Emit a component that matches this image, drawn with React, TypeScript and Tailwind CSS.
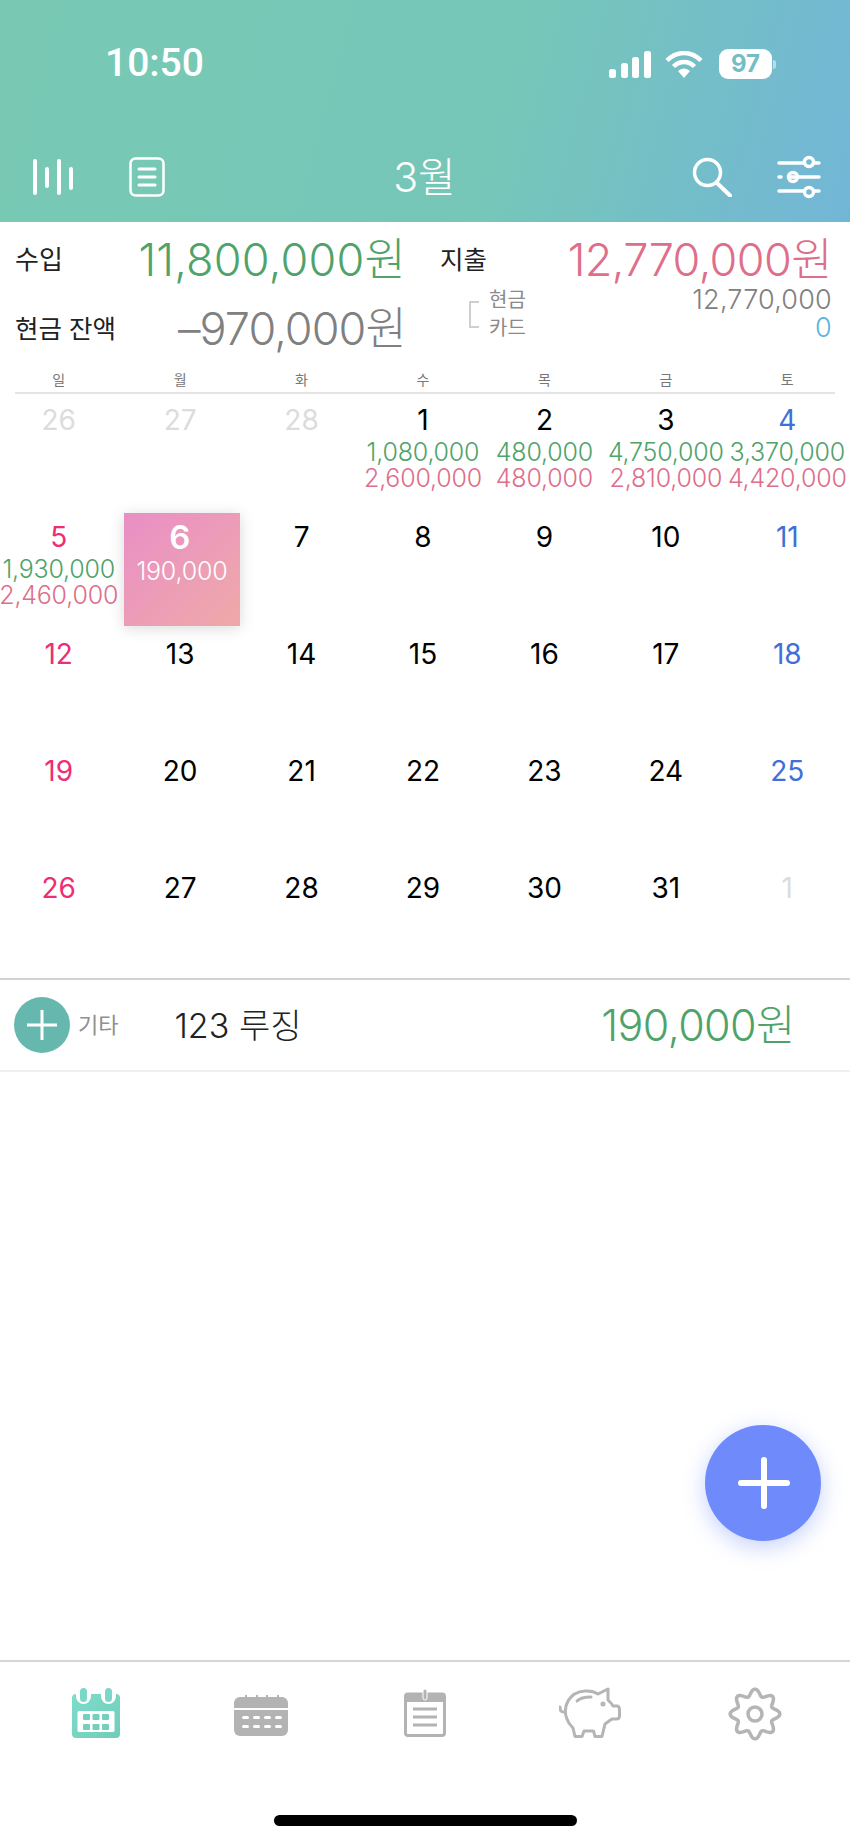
const num = { fontFamily: '"Inter", "Noto Sans CJK KR", sans-serif' };

interface DayCell {
  day: number;
  tone?: "muted" | "sun" | "sat";
  income?: string;
  spend?: string;
  selected?: boolean;
}

const weekdays = ["일", "월", "화", "수", "목", "금", "토"];

const days: DayCell[] = [
  { day: 26, tone: "muted" },
  { day: 27, tone: "muted" },
  { day: 28, tone: "muted" },
  { day: 1, income: "1,080,000", spend: "2,600,000" },
  { day: 2, income: "480,000", spend: "480,000" },
  { day: 3, income: "4,750,000", spend: "2,810,000" },
  { day: 4, tone: "sat", income: "3,370,000", spend: "4,420,000" },
  { day: 5, tone: "sun", income: "1,930,000", spend: "2,460,000" },
  { day: 6, selected: true, income: "190,000" },
  { day: 7 },
  { day: 8 },
  { day: 9 },
  { day: 10 },
  { day: 11, tone: "sat" },
  { day: 12, tone: "sun" },
  { day: 13 },
  { day: 14 },
  { day: 15 },
  { day: 16 },
  { day: 17 },
  { day: 18, tone: "sat" },
  { day: 19, tone: "sun" },
  { day: 20 },
  { day: 21 },
  { day: 22 },
  { day: 23 },
  { day: 24 },
  { day: 25, tone: "sat" },
  { day: 26, tone: "sun" },
  { day: 27 },
  { day: 28 },
  { day: 29 },
  { day: 30 },
  { day: 31 },
  { day: 1, tone: "muted" },
];

function toneClass(tone?: DayCell["tone"]) {
  if (tone === "muted") return "text-[#dcdcdc]";
  if (tone === "sun") return "text-[#ee2d75]";
  if (tone === "sat") return "text-[#3f6fd8]";
  return "text-black";
}

function Cell({ cell }: { cell: DayCell }) {
  if (cell.selected) {
    return (
      <div className="h-[117px] pt-[3px] pl-[4.5px]">
        <div className="flex h-[113px] w-[116px] flex-col items-center bg-linear-to-br from-[#e98ec6] to-[#efa9a8] pt-[6px] text-white shadow-[0_2px_14px_rgba(0,0,0,0.15)]">
          <div className="pr-[4px] text-[33px] leading-[36px] font-semibold">{cell.day}</div>
          <div className="mt-[2px] text-[25px] leading-[28px] font-light tracking-[-0.2px]">{cell.income}</div>
        </div>
      </div>
    );
  }
  return (
    <div className="flex h-[117px] flex-col items-center pt-[9px]">
      <div className={`text-[28px] leading-[36px] ${toneClass(cell.tone)}`}>{cell.day}</div>
      {cell.income && (
        <div className="mt-[1px] text-[25px] leading-[26px] font-light tracking-[-0.2px] whitespace-nowrap text-[#4fa36a]">
          {cell.income}
        </div>
      )}
      {cell.spend && (
        <div className="text-[25px] leading-[26px] font-light tracking-[-0.2px] whitespace-nowrap text-[#de6e8a]">
          {cell.spend}
        </div>
      )}
    </div>
  );
}

function StatusIcons() {
  return (
    <div className="flex items-center">
      <svg width="42" height="27" viewBox="0 0 42 27" fill="white">
        <rect x="0" y="18" width="7" height="9" rx="2.5" />
        <rect x="12" y="12" width="7" height="15" rx="2.5" />
        <rect x="23" y="6" width="7" height="21" rx="2.5" />
        <rect x="35" y="0" width="7" height="27" rx="2.5" />
      </svg>
      <svg className="ml-[14px]" width="38" height="27" viewBox="0 0 38 27" fill="none" stroke="white" strokeLinecap="butt">
        <path d="M2 9.5C12 -0.5 26 -0.5 36 9.5" strokeWidth="4.5" />
        <path d="M8.5 15.5C14.5 9.5 23.5 9.5 29.5 15.5" strokeWidth="4.5" />
        <path d="M13 20L19 27L25 20C21 16.5 17 16.5 13 20Z" fill="white" stroke="none" />
      </svg>
      <div className="ml-[16px] flex h-[30px] w-[53px] items-center justify-center rounded-[9px] bg-white text-[24px] leading-none font-bold text-[#74bdc4]">
        97
      </div>
      <div className="ml-[1px] h-[9px] w-[3px] rounded-r-full bg-white/50" />
    </div>
  );
}

function BarsIcon() {
  return (
    <svg width="42" height="36" viewBox="0 0 42 36" fill="none" stroke="white" strokeWidth="4" strokeLinecap="round">
      <path d="M3 2V34M15 10V27M27 2V34M39 10V29" />
    </svg>
  );
}

function DocIcon() {
  return (
    <svg width="36" height="40" viewBox="0 0 36 40" fill="none" stroke="white" strokeWidth="2.5" strokeLinecap="round">
      <rect x="1.5" y="1.5" width="33" height="37" rx="5" />
      <path d="M10 12H26M10 20H26M10 28H26" strokeWidth="3" />
    </svg>
  );
}

function SearchIcon() {
  return (
    <svg width="40" height="40" viewBox="0 0 40 40" fill="none" stroke="white" strokeWidth="3.5" strokeLinecap="round">
      <circle cx="15.5" cy="15.5" r="13" />
      <path d="M25 26L38 38.5" strokeWidth="4" />
    </svg>
  );
}

function SlidersIcon() {
  return (
    <svg width="44" height="44" viewBox="0 0 44 44" fill="none" stroke="white" strokeWidth="3.5" strokeLinecap="round">
      <path d="M2 8H27M37 8H42M2 22H4M13 22H42M2 36H27M37 36H42" />
      <circle cx="32" cy="7" r="4.5" />
      <circle cx="16" cy="22" r="4.5" />
      <circle cx="32" cy="37" r="4.5" />
    </svg>
  );
}

function CalendarTab() {
  return (
    <svg width="48" height="50" viewBox="0 0 48 50">
      <defs>
        <linearGradient id="tabGrad" x1="0" y1="0" x2="1" y2="1">
          <stop offset="0" stopColor="#7fdccb" />
          <stop offset="1" stopColor="#70cdb8" />
        </linearGradient>
      </defs>
      <path d="M4 6H44A4 4 0 0 1 48 10V46A4 4 0 0 1 44 50H4A4 4 0 0 1 0 46V10A4 4 0 0 1 4 6Z" fill="url(#tabGrad)" />
      <rect x="4" y="-2" width="15" height="18" rx="7.5" fill="white" />
      <rect x="29" y="-2" width="15" height="18" rx="7.5" fill="white" />
      <rect x="8" y="0" width="7" height="14" rx="3.5" fill="#7bd8c6" />
      <rect x="33" y="0" width="7" height="14" rx="3.5" fill="#7bd8c6" />
      <rect x="5.5" y="23" width="37" height="21" rx="1.5" fill="white" />
      {[11, 20.5, 30].map((x) =>
        [26, 36].map((y) => <rect key={`${x}-${y}`} x={x} y={y} width="7" height="6" rx="1" fill="#74d0bd" />)
      )}
    </svg>
  );
}

function MonthTab() {
  return (
    <svg width="54" height="41" viewBox="0 0 54 41" fill="#b3b3b3">
      <path d="M6 2H48A6 6 0 0 1 54 8V13H0V8A6 6 0 0 1 6 2Z" />
      <path d="M0 15H54V35A6 6 0 0 1 48 41H6A6 6 0 0 1 0 35Z" />
      <path d="M12 2V0M23 2V0M33 2V0M44 2V0" stroke="#b3b3b3" strokeWidth="2" />
      {[8, 19, 30, 41].map((x) =>
        [21, 30].map((y) => <rect key={`${x}-${y}`} x={x} y={y} width="7" height="3" rx="1.5" fill="white" />)
      )}
    </svg>
  );
}

function ListTab() {
  return (
    <svg width="42" height="48" viewBox="0 0 42 48" fill="none">
      <rect x="1.5" y="5" width="39" height="41.5" rx="2.5" stroke="#b3b3b3" strokeWidth="3" />
      <rect x="1" y="4" width="40" height="9" rx="2" fill="#b3b3b3" />
      <rect x="19" y="0" width="4" height="11" rx="2" fill="#b3b3b3" stroke="white" strokeWidth="1" />
      <path d="M9 20H33M9 28H33M9 36H33" stroke="#b3b3b3" strokeWidth="3" />
    </svg>
  );
}

function PigTab() {
  return (
    <svg width="62" height="52" viewBox="0 0 62 52" fill="none" stroke="#b5b5b5" strokeWidth="3" strokeLinecap="round" strokeLinejoin="round">
      <path d="M1 20C1 25 3 25 6 25" />
      <path d="M8 32C3 20 10 5 26 4C32 3.5 36 5 39 7L49 2V13C51 15 53 17 54 19H58C60 19 60.5 21 60.5 23V29C60.5 31 59 32 57 32H53C50 34 48 35.5 46 37L43 49.5H36L34.5 44H25L23 49.5H16L14 41C11 38 9 35 8 32Z" />
      <path d="M18 14C21 11 25 10 32 10" />
      <circle cx="44" cy="17" r="1" fill="#b5b5b5" />
    </svg>
  );
}

// 8 scalloped lobes, one pointing straight up
function gearPath() {
  const pts: string[] = [];
  for (let i = 0; i < 96; i++) {
    const a = (i / 96) * Math.PI * 2;
    const r = 21.5 + 3.4 * Math.cos(8 * a);
    pts.push(`${(27 + r * Math.sin(a)).toFixed(2)} ${(27 - r * Math.cos(a)).toFixed(2)}`);
  }
  return `M${pts.join("L")}Z`;
}

function GearTab() {
  return (
    <svg width="54" height="54" viewBox="0 0 54 54" fill="none" stroke="#b5b5b5" strokeWidth="3.5" strokeLinejoin="round">
      <path d={gearPath()} />
      <circle cx="27" cy="27" r="7" />
    </svg>
  );
}

export default function App() {
  return (
    <div className="relative flex h-[1843px] w-[850px] flex-col overflow-hidden bg-white" style={num}>
      <header className="flex h-[222px] shrink-0 flex-col bg-linear-[105deg] from-[#78c9b3] via-[#76c6b9] via-60% to-[#72b6d7] text-white">
        <div className="flex h-[63px] items-end justify-between pr-[74px] pl-[105px]">
          <div className="translate-y-[16px] text-[39px] leading-[32px] font-medium" style={{ fontFamily: '"Roboto", sans-serif' }}>
            10:50
          </div>
          <div className="translate-y-[16px]">
            <StatusIcons />
          </div>
        </div>
        <div className="mt-[92px] flex items-center justify-between pr-[29px] pl-[32px]">
          <div className="flex items-center gap-[55px]">
            <BarsIcon />
            <DocIcon />
          </div>
          <div className="-translate-x-[4px] text-[41px] leading-[44px] font-light">3월</div>
          <div className="flex items-center gap-[45px]">
            <SearchIcon />
            <SlidersIcon />
          </div>
        </div>
      </header>

      <section className="flex h-[148px] shrink-0 justify-between pt-[14px] pr-[18px] pl-[15px]">
        <div className="w-[391px]">
          <div className="flex items-center justify-between">
            <span className="text-[26px] leading-[48px] text-[#222]">수입</span>
            <span className="text-[45px] leading-[48px] font-light tracking-[0.2px] text-[#4fa36a]">11,800,000원</span>
          </div>
          <div className="mt-[21px] flex items-center justify-between">
            <span className="text-[25.5px] leading-[48px] text-[#222]">현금 잔액</span>
            <span className="text-[45px] leading-[48px] font-light tracking-[-0.9px] text-[#808080]">–970,000원</span>
          </div>
        </div>
        <div className="w-[392px]">
          <div className="flex items-center justify-between">
            <span className="text-[25.5px] leading-[48px] text-[#222]">지출</span>
            <span className="text-[45px] leading-[48px] font-light tracking-[-0.6px] text-[#de6e8a]">12,770,000원</span>
          </div>
          <div className="mt-[2px] flex items-center justify-between">
            <div className="flex items-center pl-[29px]">
              <div className="h-[27px] w-[10px] border-y-2 border-l-2 border-[#cfcfcf]" />
              <div className="ml-[10px] text-[20px] leading-[28px] text-[#8a8a8a]">
                <div>현금</div>
                <div>카드</div>
              </div>
            </div>
            <div className="text-right text-[27px] leading-[28px] font-light tracking-[0.2px]">
              <div className="text-[#808080]">12,770,000</div>
              <div className="text-[#5ab4dc]">0</div>
            </div>
          </div>
        </div>
      </section>

      <div className="-ml-[2px] grid h-[22px] w-[850px] shrink-0 grid-cols-7 pt-[1px] text-center text-[14px] leading-[18px] text-[#777]">
        {weekdays.map((w) => (
          <div key={w}>{w}</div>
        ))}
      </div>
      <div className="mx-[15px] h-[2px] shrink-0 bg-[#e4e4e4]" />

      <div className="-mt-[1px] -ml-[2px] grid h-[585px] w-[850px] shrink-0 grid-cols-7 grid-rows-[repeat(5,117px)]">
        {days.map((cell, i) => (
          <Cell key={i} cell={cell} />
        ))}
      </div>

      <div className="flex h-[94px] shrink-0 items-center border-y-2 border-t-[#d2d2d2] border-b-[#f0f0f0] pr-[55px] pl-[14px]">
        <div className="flex h-[56px] w-[56px] items-center justify-center rounded-full bg-[#66b7ae]">
          <svg width="32" height="32" viewBox="0 0 32 32" stroke="white" strokeWidth="3">
            <path d="M16 1V31M1 16H31" />
          </svg>
        </div>
        <span className="ml-[8px] text-[22px] text-[#909090]">기타</span>
        <span className="ml-[56px] text-[34px] font-light text-[#222]">123 루징</span>
        <span className="ml-auto text-[43px] font-light tracking-[-0.6px] text-[#4fa36a]">190,000원</span>
      </div>

      <div className="flex-1" />

      <nav className="flex h-[183px] shrink-0 flex-col border-t-2 border-[#d6d6d6]">
        <div className="grid h-[153px] grid-cols-5 items-start pt-[25px]">
          <div className="flex translate-x-[11px] justify-center pt-[1px]"><CalendarTab /></div>
          <div className="flex translate-x-[6px] justify-center pt-[8px]"><MonthTab /></div>
          <div className="flex justify-center pt-[2px]"><ListTab /></div>
          <div className="flex -translate-x-[5px] justify-center"><PigTab /></div>
          <div className="flex -translate-x-[10px] justify-center"><GearTab /></div>
        </div>
        <div className="mx-auto h-[11px] w-[303px] rounded-full bg-black" />
      </nav>

      <button className="absolute top-[1425px] left-[705px] flex h-[116px] w-[116px] items-center justify-center rounded-full bg-[#6f8bfb] shadow-[0_6px_22px_rgba(111,139,251,0.4)]">
        <svg className="translate-x-[1px]" width="52" height="52" viewBox="0 0 52 52" stroke="white" strokeWidth="6" strokeLinecap="round">
          <path d="M26 3V49M3 26H49" />
        </svg>
      </button>
    </div>
  );
}
